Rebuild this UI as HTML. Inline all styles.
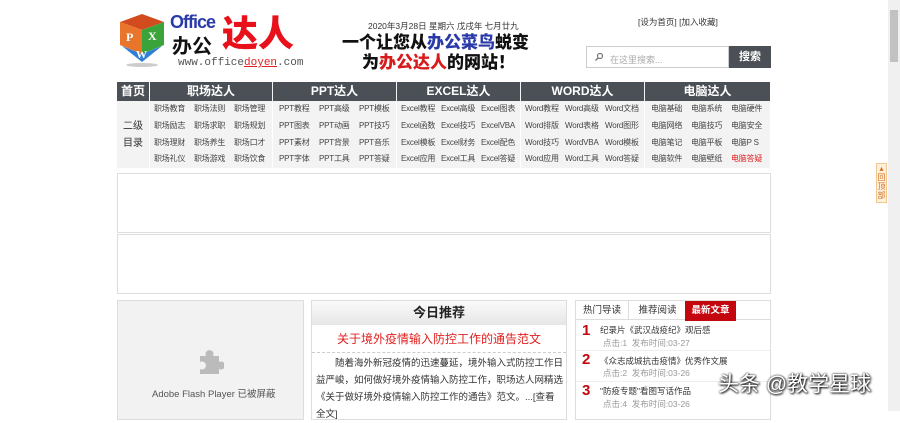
<!DOCTYPE html>
<html><head><meta charset="utf-8"><style>
*{margin:0;padding:0;box-sizing:border-box}
body{width:900px;height:411px;overflow:hidden;background:#fff;font-family:"Liberation Sans","Noto Sans CJK SC",sans-serif;position:relative;font-size:12px;color:#333}
.abs{position:absolute}
.nav{left:117px;top:82px;width:653px;height:86px;background:#f3f3f3}
.hd{top:0;height:19px;background:#4b5056;color:#fff;font-weight:bold;font-size:12px;text-align:center;line-height:19px}
.cell{top:19px;display:grid;grid-template-columns:repeat(3,40px);font-size:8px;color:#444;line-height:16.75px;white-space:nowrap;overflow:hidden;letter-spacing:-0.2px}
.cell span{overflow:hidden}
.box{border:1px solid #ddd}
</style></head><body>
<svg class="abs" style="left:118px;top:12px" width="58" height="56" viewBox="0 0 58 56">
<polygon points="24,2 46,10 24,18 2,10" fill="#d24b1e"/>
<polygon points="2,10 24,18 24,42 2,33" fill="#e8752a"/>
<polygon points="24,18 46,10 46,33 24,42" fill="#3aa33a"/>
<polygon points="4,34 24,42 44,34 24,50" fill="#2f7fd6"/>
<text x="8" y="29" font-size="12" font-weight="bold" fill="#fff" font-family="Liberation Serif">P</text>
<text x="30" y="28" font-size="12" font-weight="bold" fill="#fff" font-family="Liberation Serif">X</text>
<text x="18" y="46" font-size="11" font-weight="bold" fill="#fff" font-family="Liberation Serif">W</text>
<ellipse cx="24" cy="53" rx="16" ry="2" fill="#ccc"/>
</svg>
<div class="abs" style="left:170px;top:12px;font-size:18px;font-weight:bold;color:#2a3aa8;letter-spacing:-1px">Office</div>
<div class="abs" style="left:172px;top:33px;font-size:20px;font-weight:bold;color:#111;font-family:'Noto Sans CJK SC',sans-serif;line-height:24px">办公</div>
<div class="abs" style="left:222px;top:10px;font-size:36px;font-weight:900;color:#e8101a;font-family:'Noto Sans CJK SC',sans-serif;line-height:42px">达人</div>
<div class="abs" style="left:178px;top:57px;font-size:11px;color:#555;font-family:'Liberation Mono',monospace">www.office<span style="color:#d22;text-decoration:underline">doyen</span>.com</div>
<div class="abs" style="left:368px;top:20px;font-size:8.5px;color:#333">2020年3月28日 星期六 戊戌年 七月廿九</div>
<div class="abs" style="left:342px;top:31px;font-size:17px;font-weight:900;color:#111;font-family:'Noto Sans CJK SC',sans-serif;line-height:20px">一个让您从<span style="color:#2a3aa8">办公菜鸟</span>蜕变</div>
<div class="abs" style="left:362px;top:51px;font-size:17px;font-weight:900;color:#111;font-family:'Noto Sans CJK SC',sans-serif;line-height:20px">为<span style="color:#d81c1c">办公达人</span>的网站！</div>
<div class="abs" style="left:638px;top:16px;font-size:8.5px;color:#333">[设为首页] [加入收藏]</div>
<div class="abs box" style="left:586px;top:46px;width:143px;height:22px;border-color:#ccc"></div>
<svg class="abs" style="left:594px;top:52px" width="10" height="10" viewBox="0 0 10 10"><circle cx="6" cy="4" r="2.5" fill="none" stroke="#777" stroke-width="1.2"/><line x1="4" y1="6" x2="1.5" y2="8.5" stroke="#777" stroke-width="1.4"/></svg>
<div class="abs" style="left:610px;top:53px;font-size:9px;color:#aaa">在这里搜索...</div>
<div class="abs" style="left:729px;top:46px;width:42px;height:22px;background:#4b5056;color:#fff;font-size:11px;font-weight:bold;text-align:center;line-height:22px">搜索</div>
<div class="abs nav">
<div class="abs hd" style="left:0;width:32px">首页</div>
<div class="abs hd" style="left:33px;width:122px">职场达人</div>
<div class="abs hd" style="left:156px;width:123px">PPT达人</div>
<div class="abs hd" style="left:280px;width:123px">EXCEL达人</div>
<div class="abs hd" style="left:404px;width:123px">WORD达人</div>
<div class="abs hd" style="left:528px;width:125px">电脑达人</div>
<div class="abs" style="left:32px;top:0;width:1px;height:86px;background:#fff"></div>
<div class="abs" style="left:155px;top:19px;width:1px;height:67px;background:#fff"></div>
<div class="abs" style="left:279px;top:19px;width:1px;height:67px;background:#fff"></div>
<div class="abs" style="left:403px;top:19px;width:1px;height:67px;background:#fff"></div>
<div class="abs" style="left:527px;top:19px;width:1px;height:67px;background:#fff"></div>
<div class="abs" style="left:0;top:36px;width:32px;text-align:center;font-size:10px;line-height:17px;color:#333">二级<br>目录</div>
<div class="abs cell" style="left:37px"><span>职场教育</span><span>职场法则</span><span>职场管理</span><span>职场励志</span><span>职场求职</span><span>职场规划</span><span>职场理财</span><span>职场养生</span><span>职场口才</span><span>职场礼仪</span><span>职场游戏</span><span>职场饮食</span></div>
<div class="abs cell" style="left:162px"><span>PPT教程</span><span>PPT高级</span><span>PPT模板</span><span>PPT图表</span><span>PPT动画</span><span>PPT技巧</span><span>PPT素材</span><span>PPT背景</span><span>PPT音乐</span><span>PPT字体</span><span>PPT工具</span><span>PPT答疑</span></div>
<div class="abs cell" style="left:284px;grid-template-columns:40px 40px 42px"><span>Excel教程</span><span>Excel高级</span><span>Excel图表</span><span>Excel函数</span><span>Excel技巧</span><span>ExcelVBA</span><span>Excel模板</span><span>Excel财务</span><span>Excel配色</span><span>Excel应用</span><span>Excel工具</span><span>Excel答疑</span></div>
<div class="abs cell" style="left:408px"><span>Word教程</span><span>Word高级</span><span>Word文档</span><span>Word排版</span><span>Word表格</span><span>Word图形</span><span>Word技巧</span><span>WordVBA</span><span>Word模板</span><span>Word应用</span><span>Word工具</span><span>Word答疑</span></div>
<div class="abs cell" style="left:534px"><span>电脑基础</span><span>电脑系统</span><span>电脑硬件</span><span>电脑网络</span><span>电脑技巧</span><span>电脑安全</span><span>电脑笔记</span><span>电脑平板</span><span>电脑P S</span><span>电脑软件</span><span>电脑壁纸</span><span style="color:#e02020">电脑答疑</span></div>
</div>
<div class="abs box" style="left:117px;top:173px;width:654px;height:60px"></div>
<div class="abs box" style="left:117px;top:234px;width:654px;height:60px"></div>
<div class="abs box" style="left:117px;top:300px;width:187px;height:120px;background:#f2f2f2"></div>
<svg class="abs" style="left:196px;top:348px" width="28" height="28" viewBox="0 0 28 28"><path d="M4 8h6a4 4 0 1 1 7 0h6v6a4 4 0 1 1 0 7v5H4v-5a4 4 0 1 0 0-7z" fill="#bbb"/></svg>
<div class="abs" style="left:152px;top:386px;font-size:9.5px;color:#555">Adobe Flash Player 已被屏蔽</div>
<div class="abs box" style="left:311px;top:300px;width:256px;height:120px"></div>
<div class="abs" style="left:312px;top:301px;width:254px;height:24px;background:linear-gradient(#fafafa,#e6e6e6);text-align:center;font-size:13px;font-weight:bold;line-height:24px;color:#222">今日推荐</div>
<div class="abs" style="left:312px;top:326px;width:254px;height:27px;text-align:center;font-size:12px;color:#e02020;line-height:27px;border-bottom:1px dashed #ccc">关于境外疫情输入防控工作的通告范文</div>
<div class="abs" style="left:316px;top:355px;width:248px;font-size:9.5px;line-height:17px;color:#333;text-indent:2em">随着海外新冠疫情的迅速蔓延，境外输入式防控工作日益严峻，如何做好境外疫情输入防控工作，职场达人网精选《关于做好境外疫情输入防控工作的通告》范文。...[查看全文]</div>
<div class="abs box" style="left:575px;top:300px;width:196px;height:120px"></div>
<div class="abs" style="left:576px;top:301px;width:194px;height:19px;border-bottom:1px solid #ddd"></div>
<div class="abs" style="left:576px;top:301px;width:53px;height:19px;font-size:9.5px;text-align:center;line-height:19px;color:#333;border-right:1px solid #ddd">热门导读</div>
<div class="abs" style="left:630px;top:301px;width:55px;height:19px;font-size:9.5px;text-align:center;line-height:19px;color:#333">推荐阅读</div>
<div class="abs" style="left:685px;top:301px;width:51px;height:20px;background:#c4070f;color:#fff;font-size:9.5px;font-weight:bold;text-align:center;line-height:20px">最新文章</div>
<div class="abs" style="left:582px;top:322px;font-size:15px;font-weight:bold;color:#c4070f">1</div>
<div class="abs" style="left:600px;top:324px;font-size:8.5px;color:#333">纪录片《武汉战疫纪》观后感</div>
<div class="abs" style="left:603px;top:337px;font-size:8.5px;color:#999">点击:1 &nbsp;发布时间:03-27</div>
<div class="abs" style="left:576px;top:350px;width:194px;border-top:1px solid #eee"></div>
<div class="abs" style="left:582px;top:351px;font-size:15px;font-weight:bold;color:#c4070f">2</div>
<div class="abs" style="left:600px;top:355px;font-size:8.5px;color:#333">《众志成城抗击疫情》优秀作文展</div>
<div class="abs" style="left:603px;top:367px;font-size:8.5px;color:#999">点击:2 &nbsp;发布时间:03-26</div>
<div class="abs" style="left:576px;top:381px;width:194px;border-top:1px solid #eee"></div>
<div class="abs" style="left:582px;top:382px;font-size:15px;font-weight:bold;color:#c4070f">3</div>
<div class="abs" style="left:600px;top:385px;font-size:8.5px;color:#333">"防疫专题"看图写话作品</div>
<div class="abs" style="left:603px;top:398px;font-size:8.5px;color:#999">点击:4 &nbsp;发布时间:03-26</div>
<div class="abs" style="left:718px;top:368px;font-size:21px;color:#fff;text-shadow:0 0 2px #000,1px 1px 2px #000;white-space:nowrap">头条 @教学星球</div>
<div class="abs" style="left:876px;top:163px;width:11px;height:40px;background:#fdf0dc;border:1px solid #f0c890;font-size:8px;color:#d07020;text-align:center;line-height:9px">▴<br>回<br>顶<br>部</div>
<div class="abs" style="left:888px;top:0;width:12px;height:411px;background:#f0f0f0"></div>
<div class="abs" style="left:890px;top:10px;width:8px;height:52px;background:#c2c2c2"></div>
</body></html>
